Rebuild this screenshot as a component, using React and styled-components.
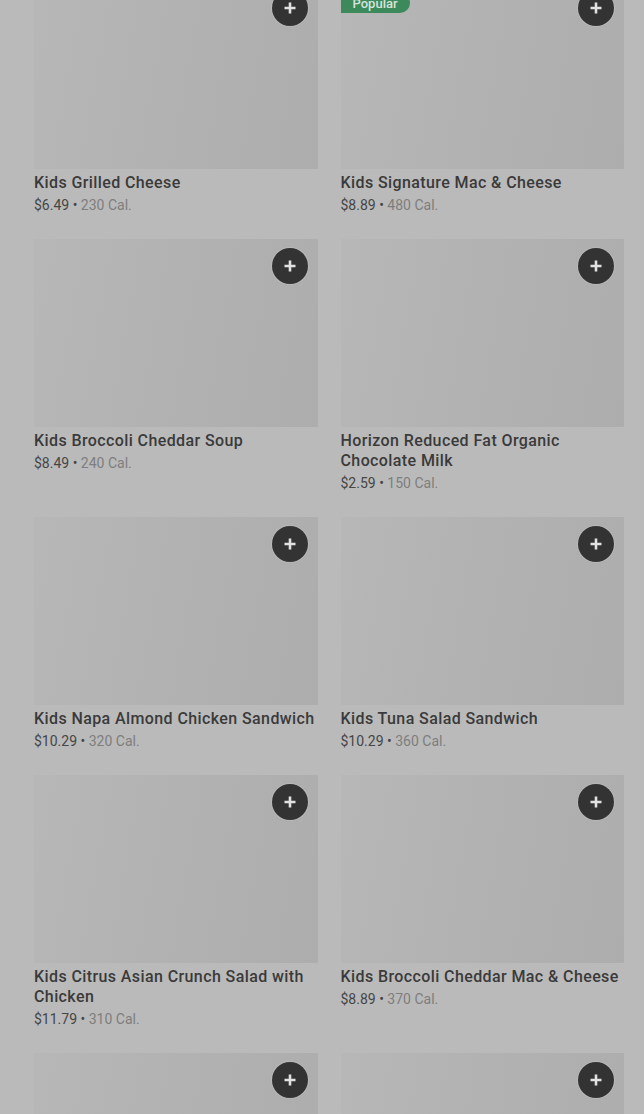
import React from "react";
import styled, { createGlobalStyle } from "styled-components";

const GlobalStyle = createGlobalStyle`
  html, body {
    margin: 0;
    padding: 0;
    background: #bababa;
    height: 1114px;
    overflow: hidden;
  }
  body {
    font-family: Roboto, "Noto Sans", "Liberation Sans", sans-serif;
    -webkit-font-smoothing: antialiased;
  }
`;

const Grid = styled.div`
  display: grid;
  grid-template-columns: 1fr 1fr;
  column-gap: 23px;
  row-gap: 24px;
  padding: 0 20px 0 34px;
  margin-top: -19px;
`;

const Card = styled.div`
  display: flex;
  flex-direction: column;
  min-width: 0;
`;

const Thumb = styled.div`
  position: relative;
  height: 188px;
  background: linear-gradient(100deg, #b7b7b7 0%, #b2b2b2 45%, #adadad 100%);
`;

const AddButton = styled.button`
  position: absolute;
  top: 9px;
  right: 10px;
  width: 36px;
  height: 36px;
  border-radius: 50%;
  border: none;
  padding: 0;
  background: #333333;
  box-shadow: 0 0 0 1px rgba(255, 255, 255, 0.12);
  display: flex;
  align-items: center;
  justify-content: center;
  cursor: pointer;
`;

const Badge = styled.span`
  position: absolute;
  top: 12px;
  left: 0;
  height: 20px;
  padding: 0 12px;
  display: flex;
  align-items: center;
  background: #3c8a5c;
  color: #d6e4db;
  font-size: 13px;
  font-weight: 500;
  border-radius: 0 10px 10px 0;
`;

const Title = styled.div`
  margin-top: 4px;
  font-size: 16px;
  line-height: 20px;
  font-weight: 500;
  letter-spacing: 0.4px;
  color: #3a3a3a;
`;

const Meta = styled.div`
  margin-top: 2px;
  font-size: 14px;
  line-height: 20px;
  color: #464646;
  span {
    color: #7e7e7e;
  }
`;

const PlusIcon = () => (
  <svg width="14" height="14" viewBox="0 0 14 14">
    <path d="M7 1.5v11M1.5 7h11" stroke="#e2e2e2" strokeWidth="2.6" />
  </svg>
);

const items = [
  { name: "Kids Grilled Cheese", price: "$6.49", cal: "230 Cal." },
  { name: "Kids Signature Mac & Cheese", price: "$8.89", cal: "480 Cal.", popular: true },
  { name: "Kids Broccoli Cheddar Soup", price: "$8.49", cal: "240 Cal." },
  { name: "Horizon Reduced Fat Organic Chocolate Milk", price: "$2.59", cal: "150 Cal." },
  { name: "Kids Napa Almond Chicken Sandwich", price: "$10.29", cal: "320 Cal." },
  { name: "Kids Tuna Salad Sandwich", price: "$10.29", cal: "360 Cal." },
  { name: "Kids Citrus Asian Crunch Salad with Chicken", price: "$11.79", cal: "310 Cal." },
  { name: "Kids Broccoli Cheddar Mac & Cheese", price: "$8.89", cal: "370 Cal." },
  { name: "Kids Turkey Sandwich", price: "$8.49", cal: "300 Cal." },
  { name: "Organic Apple Juice", price: "$2.59", cal: "100 Cal." },
];

const MenuItem = ({ name, price, cal, popular }) => (
  <Card>
    <Thumb>
      {popular && <Badge>Popular</Badge>}
      <AddButton aria-label="Add">
        <PlusIcon />
      </AddButton>
    </Thumb>
    <Title>{name}</Title>
    <Meta>
      {price} • <span>{cal}</span>
    </Meta>
  </Card>
);

export default function App() {
  return (
    <>
      <GlobalStyle />
      <Grid>
        {items.map((it) => (
          <MenuItem key={it.name} {...it} />
        ))}
      </Grid>
    </>
  );
}
